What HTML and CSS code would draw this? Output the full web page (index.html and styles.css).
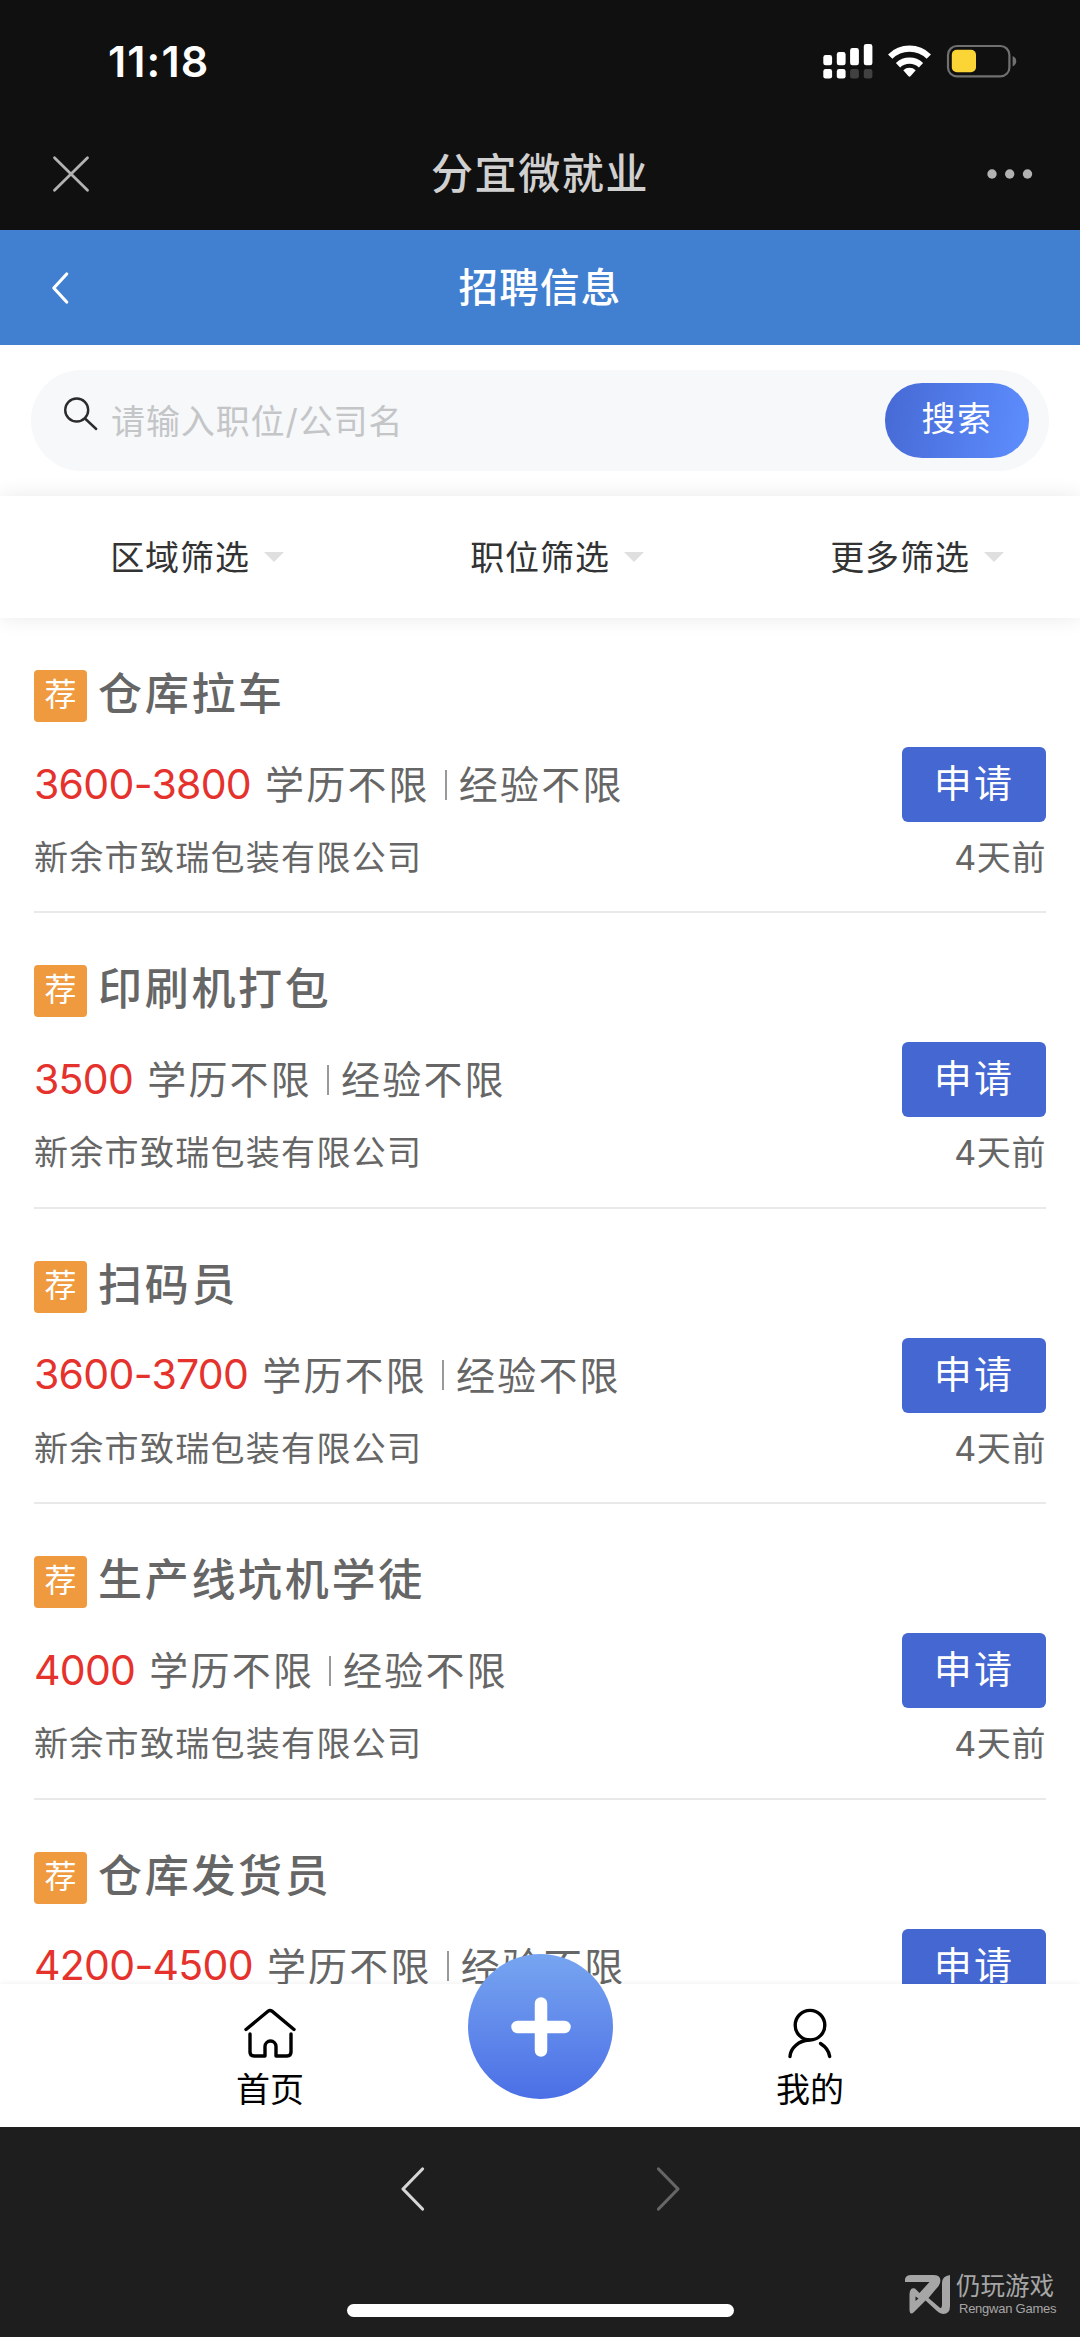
FILE: index.html
```html
<!DOCTYPE html>
<html lang="zh-CN">
<head>
<meta charset="utf-8">
<title>招聘信息</title>
<link rel="stylesheet" href="styles.css">
</head>
<body>
<div class="phone">
  <header class="chrome">
    <div class="status">
      <span class="time">11:18</span>
      <svg class="status-icons" width="200" height="40" viewBox="820 40 200 40">
        <g fill="#fff">
          <rect x="823.3" y="55" width="8.8" height="10.3" rx="2.4"/>
          <rect x="836.8" y="52" width="8.8" height="13.3" rx="2.4"/>
          <rect x="850.1" y="48" width="8.8" height="17.3" rx="2.4"/>
          <rect x="863.8" y="44" width="8.6" height="21.3" rx="2.4"/>
          <rect x="823.3" y="69" width="8.8" height="9.6" rx="2.4"/>
          <rect x="836.8" y="69" width="8.8" height="9.6" rx="2.4"/>
        </g>
        <g fill="#414141">
          <rect x="850.1" y="69" width="8.8" height="9.6" rx="2.4"/>
          <rect x="863.8" y="69" width="8.6" height="9.6" rx="2.4"/>
        </g>
        <g fill="none" stroke="#fff" stroke-width="6.2">
          <path d="M890.2 56.6a27.5 27.5 0 0 1 38.6 0"/>
          <path d="M898 65.2a16.8 16.8 0 0 1 23 0"/>
        </g>
        <path d="M903.3 70.2a9 9 0 0 1 12.4 0l-5 5.8q-1.2 1.4-2.4 0z" fill="#fff"/>
        <rect x="948" y="46" width="61.4" height="30.4" rx="9" fill="none" stroke="#707070" stroke-width="2.2"/>
        <rect x="951.8" y="49.8" width="24.2" height="22.4" rx="5" fill="#fbd535"/>
        <path d="M1012.6 56q3.6 1.6 3.6 5.2t-3.6 5.2z" fill="#707070"/>
      </svg>
    </div>
    <div class="webview-bar">
      <svg class="close" width="40" height="40" viewBox="0 0 40 40"><path d="M3.5 3.8 36.5 36.2M36.5 3.8 3.5 36.2" stroke="#b2b2b2" stroke-width="2.8" stroke-linecap="round"/></svg>
      <h1>分宜微就业</h1>
      <svg class="more" width="46" height="10" viewBox="0 0 46 10" fill="#b2b2b2"><circle cx="5" cy="5" r="4.7"/><circle cx="22.7" cy="5" r="4.7"/><circle cx="40.5" cy="5" r="4.7"/></svg>
    </div>
  </header>

  <nav class="page-bar">
    <svg width="20" height="34" viewBox="0 0 20 34"><path d="M16.7 3 3.8 17 16.7 31" fill="none" stroke="#fff" stroke-width="3.2" stroke-linecap="round" stroke-linejoin="round"/></svg>
    <h2>招聘信息</h2>
  </nav>

  <section class="search">
    <div class="pill">
      <svg width="34" height="34" viewBox="0 0 34 34" fill="none" stroke="#2b2b2b" stroke-width="2.4" stroke-linecap="round"><circle cx="12.7" cy="13" r="11.5"/><path d="M21 21.5 32.2 32"/></svg>
      <span class="placeholder">请输入职位/公司名</span>
      <span class="go">搜索</span>
    </div>
  </section>

  <section class="filters">
    <div class="filter"><span>区域筛选</span><i></i></div>
    <div class="filter"><span>职位筛选</span><i></i></div>
    <div class="filter"><span>更多筛选</span><i></i></div>
  </section>

  <main class="jobs">
    <article class="job">
      <h3><span class="tag">荐</span>仓库拉车</h3>
      <div class="terms"><b class="pay">3600-3800</b><span>学历不限</span><i></i><span>经验不限</span><span class="apply">申请</span></div>
      <div class="firm"><span>新余市致瑞包装有限公司</span><time>4天前</time></div>
    </article>
    <article class="job">
      <h3><span class="tag">荐</span>印刷机打包</h3>
      <div class="terms"><b class="pay">3500</b><span>学历不限</span><i></i><span>经验不限</span><span class="apply">申请</span></div>
      <div class="firm"><span>新余市致瑞包装有限公司</span><time>4天前</time></div>
    </article>
    <article class="job">
      <h3><span class="tag">荐</span>扫码员</h3>
      <div class="terms"><b class="pay">3600-3700</b><span>学历不限</span><i></i><span>经验不限</span><span class="apply">申请</span></div>
      <div class="firm"><span>新余市致瑞包装有限公司</span><time>4天前</time></div>
    </article>
    <article class="job">
      <h3><span class="tag">荐</span>生产线坑机学徒</h3>
      <div class="terms"><b class="pay">4000</b><span>学历不限</span><i></i><span>经验不限</span><span class="apply">申请</span></div>
      <div class="firm"><span>新余市致瑞包装有限公司</span><time>4天前</time></div>
    </article>
    <article class="job">
      <h3><span class="tag">荐</span>仓库发货员</h3>
      <div class="terms"><b class="pay">4200-4500</b><span>学历不限</span><i></i><span>经验不限</span><span class="apply">申请</span></div>
    </article>
  </main>

  <nav class="tabs">
    <div class="tab">
      <svg width="56" height="52" viewBox="0 0 56 52" fill="none" stroke="#000" stroke-width="3.4" stroke-linecap="round" stroke-linejoin="round"><path d="M4 21.500 26 3.200q2-1.600 4 0L52 21.500"/><path d="M8 26v18q0 4 4 4h11V38.500a5.500 5.500 0 0 1 11 0V48h11q4 0 4-4V26"/></svg>
      <span>首页</span>
    </div>
    <div class="tab">
      <svg width="56" height="52" viewBox="0 0 56 52" fill="none" stroke="#000" stroke-width="3.4" stroke-linecap="round"><circle cx="28" cy="17.200" r="14.800"/><path d="M27 32C17 32.500 8.500 40 8 48.500M38.500 35.500C44 39 47 43 47.700 48.500"/></svg>
      <span>我的</span>
    </div>
    <div class="add">
      <svg width="60" height="60" viewBox="0 0 60 60" stroke="#fff" stroke-width="12.500" stroke-linecap="round"><path d="M30 6.500v47M6.500 30h47"/></svg>
    </div>
  </nav>

  <footer class="browser">
    <div class="history">
      <svg width="28" height="46" viewBox="0 0 28 46" fill="none" stroke="#d6d6d6" stroke-width="3.200" stroke-linecap="round" stroke-linejoin="round"><path d="M23.500 3 4 23 23.500 43"/></svg>
      <svg width="28" height="46" viewBox="0 0 28 46" fill="none" stroke="#666" stroke-width="3.200" stroke-linecap="round" stroke-linejoin="round"><path d="M4.500 3 24 23 4.500 43"/></svg>
    </div>
    <div class="home-indicator"></div>
    <div class="brand">
      <svg width="46" height="41" viewBox="0 0 46 41"><path fill="#a6a6a6" d="M0 8V5Q1 1 6 1H28Q37 1 35 9Q34 12 31 15L23.500 24 34 33Q37 36 37 30V9Q37 2 45 1V32Q45 40 38 40Q35 40 32 37L20.500 26.500 9 38Q5 42 4.500 36V20Q5 13 10 14.500L14.500 19 24.500 8Z"/><path d="M10.500 22.500v4.500l3-2.500z" fill="#1e1e1e"/></svg>
      <div class="brand-text"><span class="brand-cn">仍玩游戏</span><span class="brand-en">Rengwan Games</span></div>
    </div>
  </footer>
</div>
</body>
</html>
```
FILE: styles.css
```css
* { box-sizing: border-box; }
body {
  margin: 0;
  background: #fff;
  font-family: "Inter", "Noto Sans CJK SC", sans-serif;
  color: #666;
}
h1, h2, h3 { margin: 0; font-weight: 500; }
svg { display: block; flex: none; }
.phone {
  width: 1080px;
  height: 2337px;
  overflow: hidden;
  display: flex;
  flex-direction: column;
}

/* system status and web view title */
.chrome { flex: none; height: 230px; background: #101010; }
.status {
  height: 118px;
  padding: 40px 60px 0 108px;
  display: flex;
  justify-content: space-between;
}
.time {
  color: #fff;
  font-size: 43px;
  line-height: 43px;
  font-weight: 600;
  letter-spacing: 1.1px;
}
.webview-bar {
  height: 112px;
  padding: 0 47px 0 51px;
  display: grid;
  grid-template-columns: 46px 1fr 46px;
  align-items: center;
}
.webview-bar h1 {
  padding-bottom: 1px;
  text-align: center;
  color: #d0d0d0;
  font-size: 42px;
  line-height: 60px;
  letter-spacing: 1.6px;
  margin-left: -4px;
}

.page-bar {
  flex: none;
  height: 115px;
  background: #417fd1;
  padding: 0 50px;
  display: grid;
  grid-template-columns: 20px 1fr 20px;
  align-items: center;
}
.page-bar h2 {
  text-align: center;
  color: #fff;
  font-size: 39.5px;
  line-height: 56px;
  letter-spacing: 1.3px;
}

/* search */
.search { flex: none; height: 151px; padding: 25px 31px 0; }
.pill {
  height: 101px;
  border-radius: 51px;
  background: #f6f8fa;
  padding: 0 20px 0 33px;
  display: flex;
  align-items: center;
}
.pill svg { margin-bottom: 13px; }
.placeholder {
  flex: 1;
  margin-left: 13px;
  padding-bottom: 3px;
  color: #c4c5c7;
  font-size: 34px;
  letter-spacing: 0.9px;
}
.go {
  width: 144px;
  height: 75px;
  border-radius: 37px;
  background: linear-gradient(100deg, #4669d4, #5e8eff);
  color: #fff;
  font-size: 34px;
  line-height: 72px;
  letter-spacing: 1.5px;
  text-align: center;
}

.filters {
  position: relative;
  flex: none;
  height: 122px;
  background: #fff;
  box-shadow: 0 0 20px rgba(0, 0, 0, 0.09);
  display: grid;
  grid-template-columns: repeat(3, 1fr);
}
.filter {
  display: flex;
  align-items: center;
  justify-content: center;
  gap: 14px;
  padding-left: 34px;
  color: #333;
  font-size: 34px;
  letter-spacing: 0.9px;
}
.filter span { padding-bottom: 3px; }
.filter i {
  border: 10px solid transparent;
  border-top-color: #dfdfdf;
  border-bottom: 0;
}

/* job list */
.jobs { flex: 1; min-height: 0; overflow: hidden; }
.job {
  height: 295.4px;
  margin: 0 34px;
  border-bottom: 2px solid #e9e9e9;
}
.job h3 {
  height: 129px;
  padding-top: 52px;
  display: flex;
  align-items: flex-start;
  gap: 11px;
  font-size: 44px;
  line-height: 49px;
  letter-spacing: 2.7px;
}
.tag {
  width: 53px;
  height: 52px;
  border-radius: 4px;
  background: #ef9a3e;
  color: #fff;
  font-size: 32px;
  font-weight: 400;
  line-height: 50px;
  letter-spacing: 0;
  text-align: center;
}
.terms {
  height: 75px;
  display: flex;
  align-items: center;
  font-size: 39px;
  letter-spacing: 2.2px;
}
.terms span { padding-bottom: 5px; }
.terms > i { width: 2px; height: 30px; margin: 0 12px 0 15px; background: #999; }
.pay {
  margin-right: 14px;
  padding-bottom: 2px;
  color: #e5322d;
  font-size: 41px;
  font-weight: 400;
  letter-spacing: -0.7px;
}
.terms .apply {
  width: 144px;
  height: 75px;
  margin-left: auto;
  padding: 0;
  border-radius: 6px;
  background: #4467d2;
  color: #fff;
  font-size: 38px;
  line-height: 72px;
  text-align: center;
}
.firm {
  height: 70px;
  display: flex;
  justify-content: space-between;
  font-size: 34px;
  line-height: 71px;
  letter-spacing: 1.3px;
}
.firm time { letter-spacing: 0.6px; }

/* bottom tabs */
.tabs {
  position: relative;
  flex: none;
  height: 143px;
  background: #fff;
  box-shadow: 0 0 6px rgba(0, 0, 0, 0.08);
  display: grid;
  grid-template-columns: repeat(2, 1fr);
}
.tab {
  display: flex;
  flex-direction: column;
  align-items: center;
  padding-top: 24px;
  color: #000;
  font-size: 34px;
  line-height: 44px;
}
.tab span { margin-top: 8px; }
.add {
  position: absolute;
  left: 468px;
  top: -30px;
  width: 145px;
  height: 145px;
  border-radius: 50%;
  background: linear-gradient(#77a5f0, #4b6fe6);
  display: grid;
  place-items: center;
}

/* browser controls */
.browser {
  position: relative;
  flex: none;
  height: 210px;
  background: #1e1e1e;
}
.history {
  padding-top: 39px;
  display: flex;
  justify-content: center;
  gap: 227px;
}
.home-indicator {
  width: 387px;
  height: 13px;
  margin: 92px auto 0;
  border-radius: 7px;
  background: #fff;
}
.brand {
  position: absolute;
  right: 24px;
  bottom: 20px;
  display: flex;
  gap: 5px;
  color: #a6a6a6;
}
.brand-text { width: 100px; }
.brand-cn { display: block; font-size: 24.5px; line-height: 25px; white-space: nowrap; }
.brand-en {
  display: block;
  margin: 2px 0 0 3px;
  font: 13px/16px "Liberation Sans", sans-serif;
  letter-spacing: -0.25px;
  white-space: nowrap;
}
```
